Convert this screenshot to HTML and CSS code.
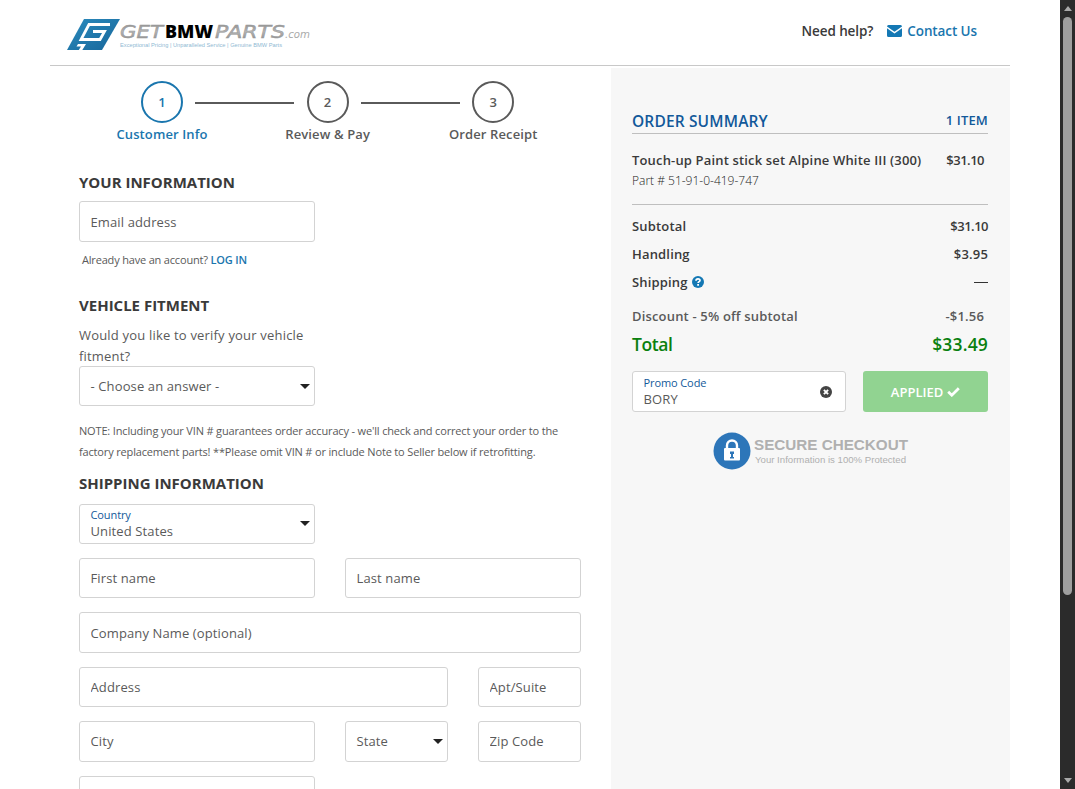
FILE: index.html
```html
<!DOCTYPE html>
<html lang="en">
<head>
  <meta charset="UTF-8">
  <meta name="viewport" content="width=device-width, initial-scale=1.0">
  <title>Checkout - GetBMWParts.com</title>
  <link rel="stylesheet" href="styles.css">
</head>
<body>
  <div class="page">
    <div class="container">
      <header class="header">
        <svg class="logo" width="246" height="36" viewBox="0 0 246 36">
          <defs>
            <linearGradient id="blue" x1="0" y1="0" x2="1" y2="1">
              <stop offset="0" stop-color="#2b8bbd"/>
              <stop offset="1" stop-color="#17669a"/>
            </linearGradient>
            <linearGradient id="silver" x1="0" y1="0" x2="0" y2="1">
              <stop offset="0" stop-color="#858585"/>
              <stop offset=".5" stop-color="#b5b5b5"/>
              <stop offset="1" stop-color="#858585"/>
            </linearGradient>
          </defs>
          <path d="M17 2H53L35 33H0z" fill="url(#blue)"/>
          <path d="M43 7.500H22L14 22.500H33L37.500 14.500H26" fill="none" stroke="#fff" stroke-width="2.800"/>
          <path d="M11 27H19L15 33.500H11.500L14 29.500H9.500z" fill="#fff"/>
          <text class="logo-silver" x="53" y="21" textLength="43" lengthAdjust="spacingAndGlyphs">GET</text>
          <text class="logo-bmw" x="98" y="21" textLength="48" lengthAdjust="spacingAndGlyphs">BMW</text>
          <text class="logo-silver" x="148" y="21" textLength="70" lengthAdjust="spacingAndGlyphs">PARTS</text>
          <text class="logo-com" x="218" y="21" textLength="25" lengthAdjust="spacingAndGlyphs">.com</text>
          <text class="logo-tag" x="53" y="29.500" textLength="162" lengthAdjust="spacingAndGlyphs">Exceptional Pricing | Unparalleled Service | Genuine BMW Parts</text>
        </svg>
        <div class="help">
          <span>Need help?</span>
          <a class="contact" href="#">
            <svg width="15" height="12" viewBox="0 0 15 12">
              <path d="M1.500 0H13.500Q15 0 15 1.500L7.500 6.800L0 1.500Q0 0 1.500 0zM0 3.200L7.500 8.400L15 3.200V10.500Q15 12 13.500 12H1.500Q0 12 0 10.500z" fill="#1478b4"/>
            </svg>
            <span>Contact Us</span>
          </a>
        </div>
      </header>

      <div class="columns">
        <main class="checkout">
          <ol class="steps">
            <li class="step active"><span class="step-number">1</span><span class="step-label">Customer Info</span></li>
            <li class="step-line"></li>
            <li class="step"><span class="step-number">2</span><span class="step-label">Review &amp; Pay</span></li>
            <li class="step-line"></li>
            <li class="step"><span class="step-number">3</span><span class="step-label">Order Receipt</span></li>
          </ol>

          <h2 class="title">YOUR INFORMATION</h2>
          <div class="fields email">
            <input class="field half" type="text" placeholder="Email address" aria-label="Email address">
          </div>
          <p class="login">Already have an account? <a href="#">LOG IN</a></p>

          <h2 class="title">VEHICLE FITMENT</h2>
          <p class="question">Would you like to verify your vehicle<br>fitment?</p>
          <div class="fields">
            <div class="field half select">
              <span class="value">- Choose an answer -</span>
              <span class="caret"></span>
            </div>
          </div>
          <p class="note">NOTE: Including your VIN # guarantees order accuracy - we'll check and correct your order to the<br>factory replacement parts! **Please omit VIN # or include Note to Seller below if retrofitting.</p>

          <h2 class="title">SHIPPING INFORMATION</h2>
          <form class="fields">
            <div class="field half select floating">
              <span class="value"><span class="float-label">Country</span>United States</span>
              <span class="caret"></span>
            </div>
            <input class="field half new-row" type="text" placeholder="First name" aria-label="First name">
            <input class="field half" type="text" placeholder="Last name" aria-label="Last name">
            <input class="field full" type="text" placeholder="Company Name (optional)" aria-label="Company Name">
            <input class="field wide" type="text" placeholder="Address" aria-label="Address">
            <input class="field" type="text" placeholder="Apt/Suite" aria-label="Apt/Suite">
            <input class="field half" type="text" placeholder="City" aria-label="City">
            <div class="field select">
              <span class="value">State</span>
              <span class="caret"></span>
            </div>
            <input class="field" type="text" placeholder="Zip Code" aria-label="Zip Code">
            <input class="field half" type="text" aria-label="Phone">
          </form>
        </main>

        <aside class="summary">
          <div class="summary-head">
            <h2>ORDER SUMMARY</h2>
            <span class="count">1 ITEM</span>
          </div>
          <div class="item">
            <div>
              <div class="item-name">Touch-up Paint stick set Alpine White III (300)</div>
              <div class="item-part">Part # 51-91-0-419-747</div>
            </div>
            <span class="price tight">$31.10</span>
          </div>
          <div class="row"><span>Subtotal</span><span class="price tight">$31.10</span></div>
          <div class="row"><span>Handling</span><span class="price">$3.95</span></div>
          <div class="row">
            <span class="shipping">Shipping
              <svg width="12" height="12" viewBox="0 0 12 12">
                <circle cx="6" cy="6" r="6" fill="#1478b4"/>
                <path d="M4 4.700C4 2.500 8 2.300 8 4.400C8 5.700 6.100 5.600 6.100 7.100" fill="none" stroke="#fff" stroke-width="1.700"/>
                <path d="M5.200 8.100h1.800v1.600H5.200z" fill="#fff"/>
              </svg>
            </span>
            <span class="dash"></span>
          </div>
          <div class="row discount"><span>Discount - 5% off subtotal</span><span class="price">-$1.56</span></div>
          <div class="row total"><span class="total-label">Total</span><span class="price">$33.49</span></div>

          <div class="promo">
            <div class="field floating promo-field">
              <span class="value"><span class="float-label">Promo Code</span>BORY</span>
              <svg width="12" height="12" viewBox="0 0 12 12">
                <circle cx="6" cy="6" r="6" fill="#444"/>
                <path d="M3.900 3.900L8.100 8.100M8.100 3.900L3.900 8.100" stroke="#fff" stroke-width="1.900"/>
              </svg>
            </div>
            <button class="applied" type="button">
              <span>APPLIED</span>
              <svg width="13" height="10" viewBox="0 0 13 10">
                <path d="M1.200 4.800L4.800 8.200L11.800 1.300" fill="none" stroke="#fff" stroke-width="2.800"/>
              </svg>
            </button>
          </div>

          <div class="secure">
            <svg width="38" height="38" viewBox="0 0 38 38">
              <circle cx="19" cy="19" r="18.500" fill="#2d76b9"/>
              <path d="M14 17V13.500a5 5 0 0 1 10 0V17" fill="none" stroke="#fff" stroke-width="2.400"/>
              <rect x="11" y="16" width="16" height="12.500" rx="1" fill="#fff"/>
              <path d="M17 19.500h4v2.500h-1v3h1v1.500h-4V25h1v-3h-1z" fill="#2d76b9"/>
            </svg>
            <svg class="secure-copy" width="160" height="38" viewBox="0 0 160 38">
              <text class="secure-title" x="0" y="18" textLength="154" lengthAdjust="spacingAndGlyphs">SECURE CHECKOUT</text>
              <text class="secure-text" x="1" y="31" textLength="151" lengthAdjust="spacingAndGlyphs">Your Information is 100% Protected</text>
            </svg>
          </div>
        </aside>
      </div>
    </div>
  </div>

  <div class="scrollbar">
    <span class="arrow-up"></span>
    <span class="thumb"></span>
    <span class="arrow-down"></span>
  </div>
</body>
</html>
```
FILE: styles.css
```css
:root {
  --blue: #1a76ae;
  --navy: #12599a;
  --text: #3a3a3a;
  --muted: #5a5a5a;
  --border: #d3d3d3;
  --panel: #f7f7f7;
  --green: #0a800f;
}

* {
  margin: 0;
  padding: 0;
  box-sizing: border-box;
}

body {
  display: flex;
  height: 100vh;
  overflow: hidden;
  background: #fff;
  color: var(--text);
  font-family: "Open Sans", "Noto Sans", sans-serif;
  font-size: 13px;
  line-height: 20px;
}

a {
  color: var(--blue);
  text-decoration: none;
}

.page {
  flex: 1;
  height: 100vh;
  overflow: hidden;
}

.container {
  width: 960px;
  margin-left: 50px;
}

.header {
  display: flex;
  justify-content: space-between;
  height: 66px;
  padding: 17px 33px 0 17px;
  border-bottom: 1px solid #c8c8c8;
}

.logo-silver {
  font: italic 18px "DejaVu Sans", sans-serif;
  fill: url(#silver);
  stroke: #999;
  stroke-width: .5px;
}

.logo-bmw {
  font: 800 18px "Open Sans", sans-serif;
  fill: #000;
}

.logo-com {
  font: italic 10px "DejaVu Sans", sans-serif;
  fill: #aaa;
}

.logo-tag {
  font: 5px "Liberation Sans", sans-serif;
  fill: #8fb9d3;
}

.help {
  display: flex;
  gap: 14px;
  height: 28px;
  align-items: center;
  font-size: 13.500px;
  font-weight: 550;
  letter-spacing: -.1px;
}

.contact {
  display: flex;
  align-items: center;
  gap: 5px;
}

.columns {
  display: flex;
  justify-content: space-between;
}

.checkout {
  width: 502px;
  margin-left: 29px;
}

/* Steps */
.steps {
  display: flex;
  list-style: none;
  padding: 15px 0 0 33px;
  height: 104px;
  color: var(--muted);
}

.step {
  display: flex;
  flex-direction: column;
  align-items: center;
  width: 100px;
  gap: 1px;
  white-space: nowrap;
  font-weight: 550;
  letter-spacing: .12px;
}

.step.active {
  color: var(--blue);
}

.step-number {
  display: grid;
  place-items: center;
  width: 42px;
  height: 42px;
  border: 2px solid currentColor;
  border-radius: 50%;
}

.step-line {
  width: 99px;
  height: 2px;
  margin: 21px -16.700px 0;
  background: var(--muted);
}

/* Form */
.title {
  height: 31px;
  line-height: 24px;
  font-size: 15px;
  font-weight: 700;
}

.fields {
  display: grid;
  grid-template-columns: repeat(4, 103px);
  grid-auto-rows: 40.400px;
  gap: 14px 30px;
}

.email {
  grid-auto-rows: 41px;
}

.field {
  width: 100%;
  height: 100%;
  padding: 0 10.500px;
  border: 1px solid var(--border);
  border-radius: 3px;
  background: #fff;
  color: var(--muted);
  font-family: inherit;
  font-size: 13px;
  letter-spacing: .12px;
}

.field::placeholder {
  color: var(--muted);
  opacity: 1;
}

.email .field {
  padding-top: 1px;
}

.half {
  grid-column: span 2;
}

.new-row {
  grid-column: 1 / 3;
}

.wide {
  grid-column: span 3;
}

.full {
  grid-column: span 4;
}

.select {
  display: flex;
  align-items: center;
  justify-content: space-between;
  padding-right: 4px;
}

.caret {
  border: 5px solid transparent;
  border-top-color: #222;
  border-bottom: 0;
}

.floating .value {
  display: flex;
  flex-direction: column;
  padding-bottom: 2px;
  line-height: 16px;
}

.float-label {
  color: var(--navy);
  font-size: 11px;
  letter-spacing: -.1px;
}

.login {
  padding: 8px 0 0 3px;
  height: 51px;
  font-size: 11px;
  letter-spacing: -.18px;
  color: var(--muted);
}

.login a {
  font-weight: 600;
}

.question {
  height: 42px;
  padding-top: 1px;
  line-height: 21px;
  letter-spacing: .19px;
  color: var(--muted);
}

.note {
  height: 64.600px;
  padding-top: 14px;
  line-height: 21px;
  font-size: 11px;
  letter-spacing: -.16px;
  color: var(--muted);
  white-space: nowrap;
}

.note + .title {
  height: 32.700px;
  line-height: 25px;
}

/* Order summary */
.summary {
  width: 399px;
  height: 723px;
  margin-top: 2px;
  padding: 42px 22px 0 21px;
  background: var(--panel);
}

.summary-head {
  display: flex;
  justify-content: space-between;
  height: 24px;
  border-bottom: 1px solid #bfbfbf;
  color: var(--navy);
  font-weight: 550;
  letter-spacing: .15px;
}

.summary-head h2 {
  font-size: 15.500px;
  line-height: 23px;
  font-weight: 550;
}

.item {
  display: flex;
  justify-content: space-between;
  height: 71px;
  padding: 16px 4px 0 0;
  border-bottom: 1px solid #bfbfbf;
  font-weight: 550;
  white-space: nowrap;
}

.item-name {
  letter-spacing: .16px;
}

.item-part {
  font-size: 12px;
  font-weight: 300;
  line-height: 21px;
  color: #222;
}

.row {
  display: flex;
  align-items: center;
  justify-content: space-between;
  height: 28px;
  font-weight: 550;
  letter-spacing: .17px;
}

.tight {
  letter-spacing: -.5px;
}

.item + .row {
  margin-top: 7px;
}

.shipping {
  display: flex;
  align-items: center;
  gap: 4px;
}

.dash {
  width: 14px;
  height: 1px;
  background: #333;
}

.discount {
  margin-top: 6px;
  padding-right: 4px;
  color: var(--muted);
}

.total {
  color: var(--green);
  font-size: 17.500px;
}

.total-label {
  letter-spacing: -.4px;
}

.promo {
  display: flex;
  gap: 17px;
  height: 41px;
  margin-top: 13px;
}

.promo-field {
  display: flex;
  align-items: center;
  justify-content: space-between;
  width: 214px;
  padding-right: 13px;
}

.applied {
  display: flex;
  align-items: center;
  justify-content: center;
  gap: 4px;
  width: 125px;
  border: 0;
  border-radius: 3px;
  background: #91d391;
  color: #fff;
  font-family: inherit;
  font-size: 13px;
  font-weight: 550;
}

.secure {
  display: flex;
  gap: 3px;
  margin: 20px 0 0 81px;
}

.secure-copy {
  overflow: visible;
}

.secure-title {
  font: bold 15px "Liberation Sans", sans-serif;
  fill: #b0b0b0;
}

.secure-text {
  font: 9px "Liberation Sans", sans-serif;
  fill: #b0b0b0;
}

/* Scrollbar */
.scrollbar {
  display: flex;
  flex-direction: column;
  align-items: center;
  width: 15px;
  padding: 6px 0;
  background: #2b2b2b;
}

.thumb {
  width: 9px;
  height: 578px;
  margin: 6px 0 auto;
  border-radius: 5px;
  background: #9f9f9f;
}

.arrow-up {
  border: 4.500px solid transparent;
  border-bottom: 5px solid #aaa;
  border-top: 0;
}

.arrow-down {
  border: 4.500px solid transparent;
  border-top: 5px solid #aaa;
  border-bottom: 0;
}
```
